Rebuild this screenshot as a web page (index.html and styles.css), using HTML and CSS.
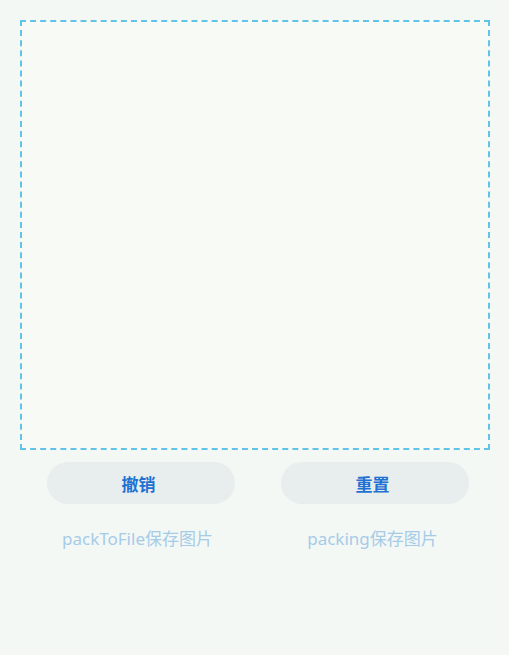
FILE: index.html
```html
<!DOCTYPE html>
<html lang="zh">
<head>
<meta charset="utf-8">
<link rel="stylesheet" href="styles.css">
</head>
<body>
<main class="page">
  <div class="canvas"></div>
  <div class="row buttons">
    <div class="cell"><button class="btn">撤销</button></div>
    <div class="cell"><button class="btn">重置</button></div>
  </div>
  <div class="row links">
    <div class="cell"><span class="link">packToFile保存图片</span></div>
    <div class="cell"><span class="link">packing保存图片</span></div>
  </div>
</main>
</body>
</html>
```
FILE: styles.css
```css
html, body {
  margin: 0;
  padding: 0;
  background: #f3f8f5;
  font-family: "Noto Sans", "Noto Sans CJK SC", sans-serif;
}
.page {
  padding: 20px 19px 20px 20px;
  width: 470px;
  height: 615px;
}
.canvas {
  box-sizing: border-box;
  width: 470px;
  height: 430px;
  border: 2px dashed #62c3e8;
  background: #f8faf6;
}
.row {
  display: flex;
  margin-top: 12px;
}
.buttons {
  padding-left: 4px;
  width: 468px;
}
.cell {
  flex: 1;
  display: flex;
  justify-content: center;
  align-items: center;
  height: 42px;
}
.btn {
  width: 188px;
  height: 42px;
  border: none;
  border-radius: 21px;
  background: #e8eded;
  color: #1f72d2;
  font-family: "Noto Sans CJK SC", sans-serif;
  font-size: 17px;
  font-weight: 700;
  padding: 0 5px 0 0;
}
.links {
  margin-top: 14px;
}
.link {
  color: #a6cbe8;
  font-size: 17px;
  line-height: 20px;
}
```
